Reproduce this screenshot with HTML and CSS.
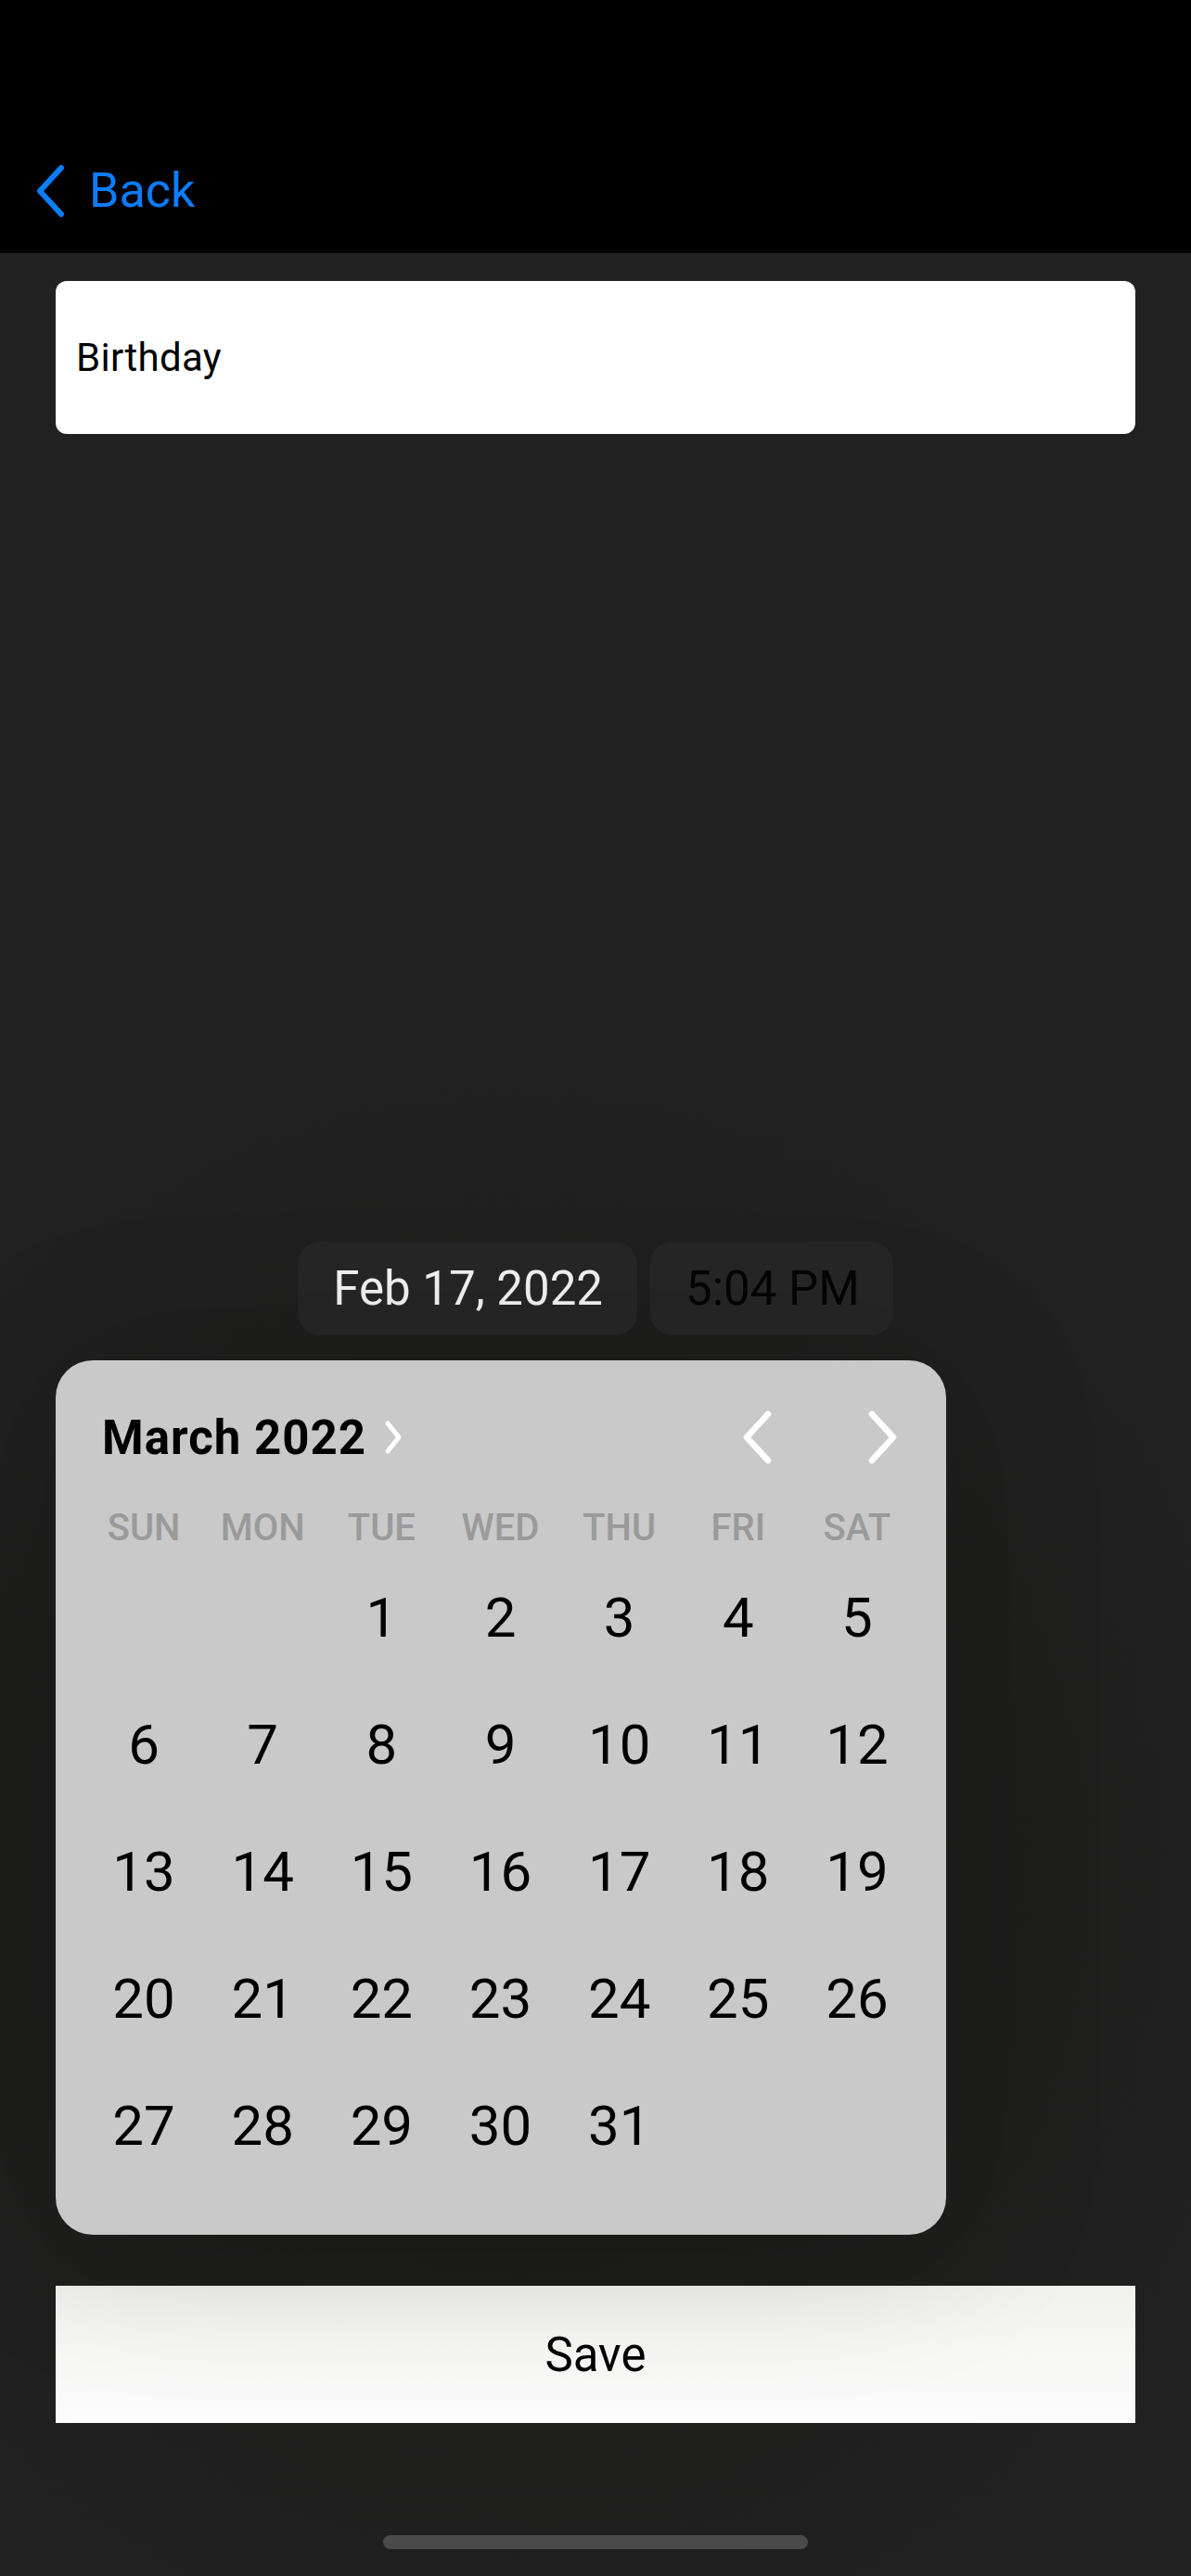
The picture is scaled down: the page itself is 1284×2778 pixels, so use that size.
FILE: index.html
```html
<!DOCTYPE html>
<html lang="en">
<head>
<meta charset="utf-8">
<title>Birthday</title>
<link rel="stylesheet" href="styles.css">
</head>
<body>
<div class="screen">
  <header class="nav">
    <div class="back">
      <svg class="back-chev" width="36" height="58" viewBox="0 0 36 58"><path d="M30 4 L7 29 L30 54" fill="none" stroke="#0b7dff" stroke-width="6" stroke-linecap="round" stroke-linejoin="round"/></svg>
      <span class="back-label">Back</span>
    </div>
  </header>
  <main class="content">
    <div class="field">Birthday</div>
    <div class="date-row">
      <div class="pill pill-date">Feb 17, 2022</div>
      <div class="pill pill-time">5:04 PM</div>
    </div>
    <section class="calendar">
      <div class="cal-head">
        <div class="month">
          <span class="month-label">March 2022</span>
          <svg class="month-chev" width="26" height="40" viewBox="0 0 26 40"><path d="M7 5 L19 20 L7 35" fill="none" stroke="#ffffff" stroke-width="5" stroke-linecap="round" stroke-linejoin="round"/></svg>
        </div>
        <div class="arrows">
          <svg class="arrow" width="34" height="58" viewBox="0 0 34 58"><path d="M29 4 L6 29 L29 54" fill="none" stroke="#ffffff" stroke-width="6.5" stroke-linecap="round" stroke-linejoin="round"/></svg>
          <svg class="arrow" width="34" height="58" viewBox="0 0 34 58"><path d="M5 4 L28 29 L5 54" fill="none" stroke="#ffffff" stroke-width="6.5" stroke-linecap="round" stroke-linejoin="round"/></svg>
        </div>
      </div>
      <div class="weekdays">
        <span>SUN</span><span>MON</span><span>TUE</span><span>WED</span><span>THU</span><span>FRI</span><span>SAT</span>
      </div>
      <div class="days">
        <span></span><span></span><span>1</span><span>2</span><span>3</span><span>4</span><span>5</span>
        <span>6</span><span>7</span><span>8</span><span>9</span><span>10</span><span>11</span><span>12</span>
        <span>13</span><span>14</span><span>15</span><span>16</span><span>17</span><span>18</span><span>19</span>
        <span>20</span><span>21</span><span>22</span><span>23</span><span>24</span><span>25</span><span>26</span>
        <span>27</span><span>28</span><span>29</span><span>30</span><span>31</span><span></span><span></span>
      </div>
    </section>
    <button class="save">Save</button>
    <div class="home-indicator"></div>
  </main>
</div>
</body>
</html>
```

FILE: styles.css
```css
* { box-sizing: border-box; }

html, body {
  margin: 0;
  padding: 0;
  background: #212121;
}

body {
  width: 1284px;
  height: 2778px;
  overflow: hidden;
  font-family: Roboto, "Liberation Sans", Arial, sans-serif;
}

.screen {
  display: flex;
  flex-direction: column;
  width: 1284px;
  height: 2778px;
}

.nav {
  background: #000000;
  height: 273px;
  flex: none;
  display: flex;
  flex-direction: column;
  justify-content: flex-end;
  padding: 0 0 22px 36px;
}

.back {
  display: flex;
  align-items: center;
  height: 90px;
  gap: 24px;
}

.back-chev { display: block; }

.back-label {
  color: #0b7dff;
  font-size: 52px;
  line-height: 1;
}

.content {
  flex: 1;
  display: flex;
  flex-direction: column;
  padding: 30px 60px 29px;
  background: radial-gradient(ellipse 900px 950px at 560px 1750px, #1a1b19 0%, #1c1d1b 45%, #212121 100%);
}

.field {
  height: 165px;
  background: #ffffff;
  border-radius: 12px;
  display: flex;
  align-items: center;
  padding-left: 22px;
  font-size: 42px;
  color: #000000;
  letter-spacing: 0.3px;
}

.date-row {
  margin-top: auto;
  display: flex;
  justify-content: center;
  gap: 14px;
  height: 101px;
}

.pill {
  height: 101px;
  border-radius: 24px;
  background: #252625;
  display: flex;
  align-items: center;
  font-size: 51px;
}

.pill-date { color: #f2f2f2; padding: 0 37px 0 38px; }
.pill-time { color: #050505; padding: 0 36px 0 38px; }

.calendar {
  position: relative;
  z-index: 1;
  margin-top: 27px;
  width: 960px;
  height: 943px;
  background: #c9c9c9;
  border-radius: 40px;
  padding: 33px 32px 50px 31px;
  box-shadow: 0 10px 180px rgba(0, 0, 0, 0.16);
}

.cal-head {
  height: 100px;
  display: flex;
  align-items: center;
  justify-content: space-between;
  padding: 0 19px 0 19px;
}

.month {
  display: flex;
  align-items: center;
}

.month-label {
  font-size: 51px;
  font-weight: 700;
  color: #000000;
  letter-spacing: 1px;
}

.month-chev {
  display: block;
  margin-left: 16px;
}

.arrows {
  display: flex;
  align-items: center;
  gap: 102px;
}

.arrow { display: block; }

.weekdays {
  margin-top: 24px;
  display: grid;
  grid-template-columns: repeat(7, 1fr);
  height: 48px;
  line-height: 48px;
  font-size: 40px;
  font-weight: 500;
  color: #9a9a9a;
  text-align: center;
}

.days {
  margin-top: 4px;
  display: grid;
  grid-template-columns: repeat(7, 1fr);
  grid-auto-rows: 137px;
  font-size: 60px;
  color: #000000;
  text-align: center;
}

.days span {
  display: flex;
  align-items: center;
  justify-content: center;
}

.save {
  margin-top: 55px;
  height: 148px;
  width: 100%;
  flex: none;
  border: none;
  border-radius: 0;
  background: linear-gradient(to bottom, #f0f0ef 0%, #f7f7f6 45%, #fbfbfb 100%);
  font-family: Roboto, "Liberation Sans", Arial, sans-serif;
  font-size: 51px;
  color: #000000;
  padding: 0;
}

.home-indicator {
  margin: 121px auto 0;
  width: 458px;
  height: 15px;
  flex: none;
  border-radius: 8px;
  background: #4a4a4a;
}
```
